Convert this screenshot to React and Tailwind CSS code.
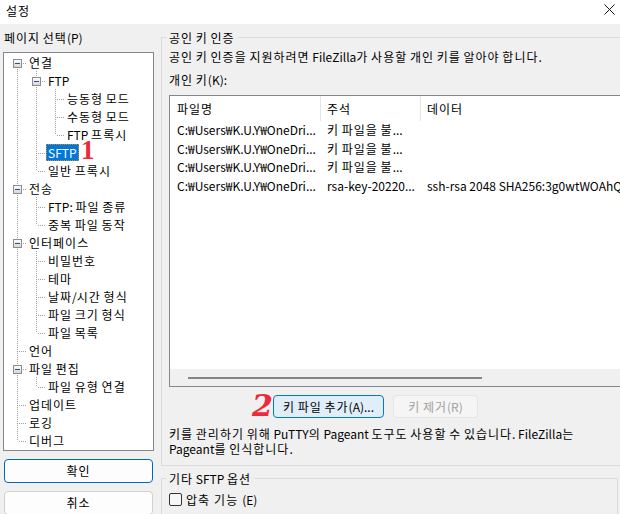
import React from "react";

const tree = [
  {
    t: "연결",
    c: [
      { t: "FTP", c: [{ t: "능동형 모드" }, { t: "수동형 모드" }, { t: "FTP 프록시" }] },
      { t: "SFTP", sel: true },
      { t: "일반 프록시" },
    ],
  },
  { t: "전송", c: [{ t: "FTP: 파일 종류" }, { t: "중복 파일 동작" }] },
  {
    t: "인터페이스",
    c: [{ t: "비밀번호" }, { t: "테마" }, { t: "날짜/시간 형식" }, { t: "파일 크기 형식" }, { t: "파일 목록" }],
  },
  { t: "언어" },
  { t: "파일 편집", c: [{ t: "파일 유형 연결" }] },
  { t: "업데이트" },
  { t: "로깅" },
  { t: "디버그" },
];

function flatten(nodes, trail = [], out = []) {
  nodes.forEach((n, i) => {
    const last = i === nodes.length - 1;
    const first = trail.length === 0 && i === 0;
    out.push({ ...n, trail, last, first });
    if (n.c) flatten(n.c, [...trail, last], out);
  });
  return out;
}

const rows = flatten(tree);

// hangul glyphs in the original font are a bit wider, so space out hangul runs only
function K({ children }) {
  const parts = String(children).split(/([\uAC00-\uD7A3\u3131-\u318E]+)/);
  return parts.map((p, i) =>
    i % 2 === 1 ? (
      <span key={i} className="tracking-[1px]">
        {p}
      </span>
    ) : (
      p
    )
  );
}

const dot = { stroke: "#a0a0a0", strokeWidth: 1, strokeDasharray: "1 1" };

function Guide({ kind, box }) {
  const own = kind === "tee" || kind === "ell" || kind === "first";
  return (
    <svg width="19" height="18" className="shrink-0" shapeRendering="crispEdges">
      {(kind === "pipe" || kind === "tee") && <line x1="9.5" y1="0" x2="9.5" y2="18" {...dot} />}
      {kind === "ell" && <line x1="9.5" y1="0" x2="9.5" y2="10" {...dot} />}
      {kind === "first" && <line x1="9.5" y1="10" x2="9.5" y2="18" {...dot} />}
      {own && <line x1="11" y1="10.5" x2="19" y2="10.5" {...dot} />}
      {box && (
        <g>
          <defs>
            <linearGradient id="exp" x1="0" y1="0" x2="0" y2="1">
              <stop offset="0" stopColor="#ffffff" />
              <stop offset="1" stopColor="#d4d4d4" />
            </linearGradient>
          </defs>
          <rect x="5.5" y="6.5" width="8" height="8" fill="url(#exp)" stroke="#8c8c8c" />
          <line x1="7" y1="10.5" x2="12" y2="10.5" stroke="#2d4f8a" />
        </g>
      )}
    </svg>
  );
}

function TreeRow({ row }) {
  const ownKind = row.first ? "first" : row.last ? "ell" : "tee";
  return (
    <div className="flex h-[18px] items-center">
      {row.trail.map((last, i) => (
        <Guide key={i} kind={last ? "blank" : "pipe"} />
      ))}
      <Guide kind={ownKind} box={!!row.c} />
      <span
        className={`px-[2px] h-[17px] leading-[17px] whitespace-nowrap ${
          row.sel ? "bg-[#0078d7] text-white outline outline-1 outline-dotted outline-[#e08a1e] -outline-offset-1" : "text-black"
        }`}
      >
        <K>{row.t}</K>
      </span>
    </div>
  );
}

const keys = [
  ["C:₩Users₩K.U.Y₩OneDri...", "키 파일을 불...", ""],
  ["C:₩Users₩K.U.Y₩OneDri...", "키 파일을 불...", ""],
  ["C:₩Users₩K.U.Y₩OneDri...", "키 파일을 불...", ""],
  ["C:₩Users₩K.U.Y₩OneDri...", "rsa-key-20220...", "ssh-rsa 2048 SHA256:3g0wtWOAhQk2Zp"],
];

export default function App() {
  return (
    <div
      className="w-[620px] h-[514px] bg-[#f0f0f0] overflow-hidden text-[12px] text-black"
      style={{ fontFamily: '"Noto Sans CJK KR", "Noto Sans", sans-serif' }}
    >
      {/* title bar */}
      <div className="h-[24px] bg-white flex items-center justify-between pl-[6px] pr-[5px]">
        <span className="leading-[15px] -mt-[4px]">
          <K>설정</K>
        </span>
        <svg width="11" height="11" viewBox="0 0 11 11" className="-mt-[5px]">
          <path d="M0.5 0.5 L10.5 10.5 M10.5 0.5 L0.5 10.5" stroke="#111" strokeWidth="1" />
        </svg>
      </div>

      <div className="flex pt-[6px]">
        {/* left: page selection */}
        <div className="ml-[3px] w-[151px] shrink-0 flex flex-col">
          <div className="h-[15px] leading-[15px] pl-[1px] whitespace-nowrap">
            <K>페이지 선택(P)</K>
          </div>
          <div className="relative mt-[7px] h-[399px] bg-white border border-[#828790] pl-[4px] overflow-hidden">
            {rows.map((r, i) => (
              <TreeRow key={i} row={r} />
            ))}
            <span
              className="absolute left-[77px] top-[84px] text-[#ee2a3a] text-[27px] leading-none font-bold"
              style={{ fontFamily: '"Liberation Serif", serif' }}
            >
              1
            </span>
          </div>
          <button className="mt-[8px] mx-[1px] h-[24px] rounded-[4px] border border-[#0067c0] bg-[#fdfdfd] text-[12px] leading-none">
            <K>확인</K>
          </button>
          <button className="mt-[8px] mx-[1px] h-[24px] rounded-[4px] border border-[#d0d0d0] bg-[#fdfdfd] text-[12px] leading-none">
            <K>취소</K>
          </button>
        </div>

        {/* right: SFTP settings */}
        <div className="ml-[7px] w-[457px] flex flex-col">
          <fieldset className="border border-[#dcdcdc] px-[7px] pb-[8px] h-[436px]">
            <legend className="px-[3px] -ml-[3px] leading-[15px]">
              <K>공인 키 인증</K>
            </legend>
            <div className="mt-[4px] leading-[15px] whitespace-nowrap">
              <K>공인 키 인증을 지원하려면 FileZilla가 사용할 개인 키를 알아야 합니다.</K>
            </div>
            <div className="mt-[8px] leading-[15px]">
              <K>개인 키(K):</K>
            </div>

            <div className="mt-[8px] h-[292px] bg-white border border-[#828790] flex flex-col overflow-hidden">
              <div className="flex h-[25px] shrink-0">
                <div className="w-[151px] border-r border-[#e5e5e5] pl-[7px] flex items-center">
                  <K>파일명</K>
                </div>
                <div className="w-[100px] border-r border-[#e5e5e5] pl-[6px] flex items-center">
                  <K>주석</K>
                </div>
                <div className="flex-1 pl-[6px] flex items-center">
                  <K>데이터</K>
                </div>
              </div>
              {keys.map((k, i) => (
                <div key={i} className="flex h-[18.5px] items-center whitespace-nowrap">
                  <div className="w-[151px] pl-[7px] overflow-hidden">{k[0]}</div>
                  <div className="w-[100px] pl-[6px] overflow-hidden">
                    <K>{k[1]}</K>
                  </div>
                  <div className="flex-1 pl-[6px] overflow-hidden">{k[2]}</div>
                </div>
              ))}
              <div className="flex-1" />
              <div className="h-[17px] bg-[#f0f0f0] flex items-center shrink-0">
                <div className="ml-[18px] w-[294px] h-[2px] bg-[#858585]" />
              </div>
            </div>

            <div className="relative mt-[8px] h-[23px] flex">
              <span
                className="absolute left-[83px] -top-[4px] text-[#ee2a3a] text-[30px] leading-none italic font-bold"
                style={{ fontFamily: '"DejaVu Serif", serif' }}
              >
                2
              </span>
              <button className="ml-[104px] w-[111px] h-[23px] rounded-[4px] border border-[#0078d7] bg-[#e0eef9] text-[12px] leading-none whitespace-nowrap">
                <K>키 파일 추가(A)...</K>
              </button>
              <button className="ml-[9px] w-[85px] h-[23px] rounded-[4px] border border-[#e5e5e5] bg-[#f5f5f5] text-[#a2a2a2] text-[12px] leading-none whitespace-nowrap">
                <K>키 제거(R)</K>
              </button>
            </div>

            <div className="mt-[8px] leading-[15px] whitespace-nowrap">
              <K>키를 관리하기 위해 PuTTY의 Pageant 도구도 사용할 수 있습니다. FileZilla는</K>
              <br />
              <K>Pageant를 인식합니다.</K>
            </div>
          </fieldset>

          <fieldset className="mt-[5px] border border-[#dcdcdc] px-[7px] h-[60px]">
            <legend className="px-[3px] -ml-[3px] leading-[15px]">
              <K>기타 SFTP 옵션</K>
            </legend>
            <label className="mt-[6px] flex items-center gap-[4px] leading-[15px]">
              <span className="w-[13px] h-[13px] rounded-[2px] border border-[#333] bg-[#f7f7f7]" />
              <K>압축 기능(E)</K>
            </label>
          </fieldset>
        </div>
      </div>
    </div>
  );
}
